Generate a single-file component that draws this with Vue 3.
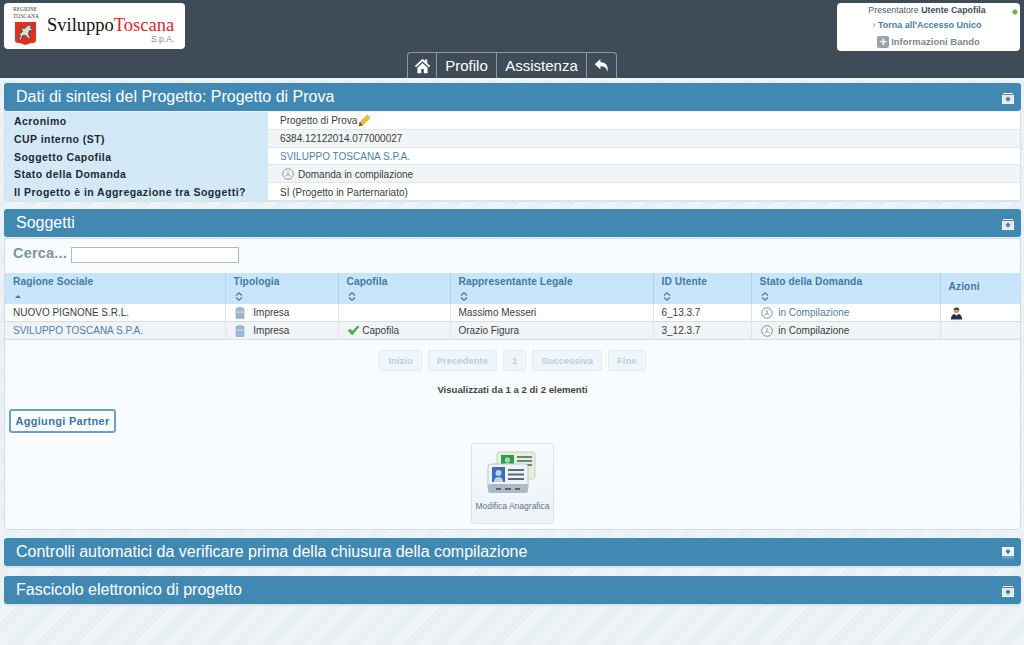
<template>
  <div class="page">
    <!-- testata -->
    <header class="top">
      <div class="top-row">
        <div class="logo-box">
          <div class="regione">
            <span class="regione-txt">REGIONE<br>TOSCANA</span>
            <svg class="shield" viewBox="0 0 24 26">
              <path d="M1 1H23V20Q23 23 18 23L12 25L6 23Q1 23 1 20Z" fill="#e0301e" />
              <path d="M4 15L9 11L7 7L11 8L14 5L19 4L17 7L20 10L16 10L15 14L18 19L15 18L12 15L9 15L7 20L5 19L7 15Z" fill="#dcdcdc" stroke="#4a4a4a" stroke-width=".9" />
            </svg>
          </div>
          <div class="brand">
            <div class="brand-name">Sviluppo<span class="red">Toscana</span></div>
            <div class="spa">S.p.A.</div>
          </div>
        </div>
        <div class="user-box">
          <i class="led"></i>
          <div class="user-line first">Presentatore <b>Utente Capofila</b></div>
          <div class="user-line back">› <b>Torna all'Accesso Unico</b></div>
          <div class="user-line info"><i class="plus">+</i><b>Informazioni Bando</b></div>
        </div>
      </div>
      <nav class="tabs">
        <a class="tab icon">
          <svg viewBox="0 0 20 20" width="17" height="17"><path d="M10 2L1 10.5L2.5 12L10 5L17.5 12L19 10.5L15.5 7.2V3H13V4.8Z M4 12.5L10 7L16 12.5V19H11.5V14H8.500V19H4Z" fill="#fff" /></svg>
        </a>
        <a class="tab">Profilo</a>
        <a class="tab">Assistenza</a>
        <a class="tab icon">
          <svg viewBox="0 0 20 20" width="16" height="17"><path d="M8 2V6C14 6 18 9 17 18C15.500 13 13 11 8 11V15L1 8.500Z" fill="#fff" /></svg>
        </a>
      </nav>
    </header>

    <main class="content">
      <!-- dati di sintesi -->
      <section class="panel first">
        <div class="panel-head">
          <span>Dati di sintesi del Progetto: Progetto di Prova</span>
          <svg class="toggle" viewBox="0 0 12 12"><rect x=".5" y=".5" width="11" height="11" fill="#dbe9f2" stroke="#f4f8fb" /><rect x="0" y="0" width="12" height="3" fill="#5f7f96" /><rect x="1" y="1" width="10" height="1" fill="#eef4f8" /><path d="M6 4.500L8.500 7L6 9.500L3.500 7Z" fill="#55788f" /></svg>
        </div>
        <div class="summary">
          <div v-for="(r, i) in summary" :key="i" class="sum-row" :class="{ odd: i % 2 }">
            <div class="sum-label">{{ r.label }}</div>
            <div class="sum-val" :class="r.cls">
              <svg v-if="r.clock" class="clock big" viewBox="0 0 12 12"><circle cx="6" cy="6" r="5.300" fill="#f4f6f7" stroke="#8b979e" /><path d="M6 3V6.500L3.500 8M6 6.500L8.500 8" fill="none" stroke="#7b8890" stroke-width=".8" /></svg>
              <span>{{ r.value }}</span>
              <svg v-if="r.pencil" class="pencil" viewBox="0 0 14 14"><path d="M1 13L2 9L10 1L13 4L5 12Z" fill="#f2c230" stroke="#b98a1a" stroke-width=".6" /><path d="M1 13L2 9L5 12Z" fill="#54483a" /></svg>
            </div>
          </div>
        </div>
      </section>

      <!-- soggetti -->
      <section class="panel">
        <div class="panel-head">
          <span>Soggetti</span>
          <svg class="toggle" viewBox="0 0 12 12"><rect x=".5" y=".5" width="11" height="11" fill="#dbe9f2" stroke="#f4f8fb" /><rect x="0" y="0" width="12" height="3" fill="#5f7f96" /><rect x="1" y="1" width="10" height="1" fill="#eef4f8" /><path d="M6 4.500L8.500 7L6 9.500L3.500 7Z" fill="#55788f" /></svg>
        </div>
        <div class="box">
          <div class="search">
            <label>Cerca...</label>
            <input type="text">
          </div>
          <table class="grid">
            <colgroup>
              <col v-for="(w, i) in colWidths" :key="i" :style="{ width: w + 'px' }">
            </colgroup>
            <thead>
              <tr>
                <th v-for="c in columns" :key="c.name" :class="{ plain: !c.sort }">
                  <div>{{ c.name }}</div>
                  <svg v-if="c.sort === 'asc'" class="sort" viewBox="0 0 8 9"><path d="M4 3L7 6H1Z" fill="#3d7ba3" /></svg>
                  <svg v-else-if="c.sort" class="sort" viewBox="0 0 8 9"><path d="M1 3.500L4 .8L7 3.500M1 5.500L4 8.200L7 5.500" fill="none" stroke="#3d7ba3" stroke-width="1.200" /></svg>
                </th>
              </tr>
            </thead>
            <tbody>
              <tr v-for="(r, i) in subjects" :key="i" :class="{ odd: i % 2 }">
                <td :class="{ link: r.link }">{{ r.name }}</td>
                <td class="tipo">
                  <svg class="doc" viewBox="0 0 10 12"><path d="M1 1.500H3V.5H7V1.500H9V11.500H1Z" fill="#9db6d6" stroke="#7f97b8" stroke-width=".5" /><path d="M1.500 5H8.500" stroke="#d7e2f0" /></svg>
                  Impresa
                </td>
                <td class="capo">
                  <template v-if="r.capofila">
                    <svg class="check" viewBox="0 0 14 12"><path d="M1 6L3.500 4.500L5.500 7L12 .8L13 2L5.500 11Z" fill="#46b04a" stroke="#2f8a36" stroke-width=".5" /></svg>
                    Capofila
                  </template>
                </td>
                <td>{{ r.legale }}</td>
                <td>{{ r.id }}</td>
                <td class="stato" :class="{ link: r.statoLink }">
                  <svg class="clock" viewBox="0 0 12 12"><circle cx="6" cy="6" r="5.300" fill="#f4f6f7" stroke="#8b979e" /><path d="M6 3V6.500L3.500 8M6 6.500L8.500 8" fill="none" stroke="#7b8890" stroke-width=".8" /></svg>
                  {{ r.stato }}
                </td>
                <td class="azioni">
                  <svg v-if="r.azione" class="person" viewBox="0 0 14 14"><circle cx="7" cy="3.800" r="3" fill="#c99a73" /><path d="M4 3.500Q4 .5 7 .5T10 3.500Q8 2 4 3.500Z" fill="#4a3422" /><path d="M1 13.500Q1 8 5 7.500L7 9.500L9 7.500Q13 8 13 13.500Z" fill="#28323f" /></svg>
                </td>
              </tr>
            </tbody>
          </table>

          <div class="pager">
            <span v-for="p in pages" :key="p" class="page-btn">{{ p }}</span>
          </div>
          <div class="count">Visualizzati da 1 a 2 di 2 elementi</div>

          <button class="add-btn">Aggiungi Partner</button>

          <div class="tile-wrap">
            <div class="tile">
              <svg class="tile-ico" viewBox="0 0 50 44">
                <rect x="10" y="1" width="38" height="27" rx="3" fill="#e4efdc" stroke="#c3d6b8" />
                <rect x="14" y="4" width="13" height="12" fill="#2f9a52" />
                <circle cx="20.500" cy="9" r="2.700" fill="#a5d8a8" />
                <path d="M16 16Q16 12 20.500 12T25 16Z" fill="#a5d8a8" />
                <path d="M30 6H45M30 10H45M30 14H45" stroke="#6f8478" stroke-width="2" />
                <rect x="1" y="13" width="40" height="27" rx="3" fill="#eef3f8" stroke="#b9c6d2" />
                <rect x="1" y="33" width="40" height="9" rx="2" fill="#aeb9c3" />
                <rect x="5" y="16" width="13" height="15" fill="#3d6fb8" />
                <circle cx="11.500" cy="22" r="3" fill="#b9d3ea" />
                <path d="M7 31Q7 26 11.500 26T16 31Z" fill="#b9d3ea" />
                <path d="M21 19H37M21 23.500H37M21 28H37" stroke="#5d6873" stroke-width="2" />
                <path d="M9 38H14M18 38H24M28 38H33" stroke="#59646e" stroke-width="2" />
              </svg>
              <div class="tile-label">Modifica Anagrafica</div>
            </div>
          </div>
        </div>
      </section>

      <section class="panel closed">
        <div class="panel-head">
          <span>Controlli automatici da verificare prima della chiusura della compilazione</span>
          <svg class="toggle" viewBox="0 0 12 12"><rect x=".5" y=".5" width="11" height="11" fill="#eef5f9" stroke="#f4f8fb" /><path d="M6 2L8.500 4.500L6 7L3.500 4.500Z" fill="#55788f" /><rect x="0" y="9" width="12" height="3" fill="#5b9fd0" /></svg>
        </div>
      </section>
      <section class="panel closed">
        <div class="panel-head">
          <span>Fascicolo elettronico di progetto</span>
          <svg class="toggle" viewBox="0 0 12 12"><rect x=".5" y=".5" width="11" height="11" fill="#dbe9f2" stroke="#f4f8fb" /><rect x="0" y="0" width="12" height="3" fill="#5f7f96" /><rect x="1" y="1" width="10" height="1" fill="#eef4f8" /><path d="M6 4.500L8.500 7L6 9.500L3.500 7Z" fill="#55788f" /></svg>
        </div>
      </section>
    </main>
  </div>
</template>

<script setup>
const summary = [
  { label: 'Acronimo', value: 'Progetto di Prova', pencil: true },
  { label: 'CUP interno (ST)', value: '6384.12122014.077000027' },
  { label: 'Soggetto Capofila', value: 'SVILUPPO TOSCANA S.P.A.', cls: 'link' },
  { label: 'Stato della Domanda', value: 'Domanda in compilazione', clock: true, cls: 'indent' },
  { label: 'Il Progetto è in Aggregazione tra Soggetti?', value: 'SÌ (Progetto in Parternariato)' },
]

const colWidths = [220, 113, 112, 203, 98, 189, 80]

const columns = [
  { name: 'Ragione Sociale', sort: 'asc' },
  { name: 'Tipologia', sort: 'both' },
  { name: 'Capofila', sort: 'both' },
  { name: 'Rappresentante Legale', sort: 'both' },
  { name: 'ID Utente', sort: 'both' },
  { name: 'Stato della Domanda', sort: 'both' },
  { name: 'Azioni' },
]

const subjects = [
  { name: 'NUOVO PIGNONE S.R.L.', legale: 'Massimo Messeri', id: '6_13.3.7', stato: 'in Compilazione', statoLink: true, azione: true },
  { name: 'SVILUPPO TOSCANA S.P.A.', link: true, capofila: true, legale: 'Orazio Figura', id: '3_12.3.7', stato: 'in Compilazione' },
]

const pages = ['Inizio', 'Precedente', '1', 'Successiva', 'Fine']
</script>

<style>
body { margin: 0; }
</style>

<style scoped>
.page { width: 1024px; height: 645px; overflow: hidden; font-family: "Liberation Sans", Arial, sans-serif; font-size: 10px; color: #333; background: repeating-linear-gradient(135deg, #e9f0f4 0 10px, #edf3f6 10px 20px); }
.top { height: 75px; padding-top: 3px; background: #3f4c57; border-top: 1px solid #9aa3aa; border-bottom: 2px solid #f2f6f8; margin-top: -1px; }
.top-row { display: flex; justify-content: space-between; align-items: flex-start; padding: 0 4px; height: 49px; }
.logo-box { width: 181px; height: 46px; background: #fff; border-radius: 4px; display: flex; box-sizing: border-box; padding: 3px 0 0 9px; }
.regione { width: 28px; }
.regione-txt { display: block; font-family: "Liberation Serif", serif; font-size: 5.500px; line-height: 7px; color: #444; white-space: nowrap; }
.shield { display: block; width: 23px; height: 25px; margin: 1px 0 0 1px; }
.brand { margin-left: 6px; padding-top: 9px; }
.brand-name { font-family: "Liberation Serif", serif; font-size: 18.500px; line-height: 20px; color: #111; }
.red { color: #d8282c; }
.spa { font-size: 8.500px; color: #888; text-align: right; line-height: 9px; }
.user-box { width: 183px; height: 48px; background: #fff; border-radius: 4px; text-align: center; position: relative; color: #4a5b68; box-sizing: border-box; }
.user-line { font-size: 8.800px; line-height: 16px; height: 16px; padding-right: 3px; }
.user-line.first { line-height: 14px; height: 14px; }
.user-line b { color: #3f4e5c; }
.back, .back b { color: #4e7e9e; }
.user-line.back { font-size: 9px; }
.info { font-size: 9.500px; display: flex; justify-content: center; align-items: center; height: 17px; padding-right: 0; }
.info b { color: #7d8790; }
.plus { width: 12px; height: 12px; background: #9ca3a8; color: #fff; border-radius: 2px; font-style: normal; font-weight: bold; font-size: 12px; line-height: 12px; margin-right: 2px; }
.led { position: absolute; top: 6px; right: 2px; width: 4px; height: 4px; border-radius: 50%; background: #6aa84f; border: 1px solid #b6d9a7; }
.tabs { display: flex; justify-content: center; height: 26px; }
.tab { box-sizing: border-box; height: 26px; border: 1px solid #8c989f; border-bottom: none; border-left: none; color: #fff; font-size: 15px; display: flex; align-items: center; justify-content: center; }
.tab:nth-child(2) { width: 60px; }
.tab:nth-child(3) { width: 90px; }
.tab:first-child { border-left: 1px solid #8c989f; border-top-left-radius: 4px; }
.tab:last-child { border-top-right-radius: 4px; }
.tab.icon { width: 30px; }
.content { padding: 3px 3px 0 4px; }
.panel { margin-bottom: 8px; }
.panel.first { margin-bottom: 7px; }
.panel.closed { margin-bottom: 8px; border-bottom: 2px solid #d8e4ec; border-radius: 0 0 4px 4px; }
.panel-head { height: 28px; background: #4189b3; border-radius: 3px; color: #fff; font-size: 16px; display: flex; align-items: center; justify-content: space-between; padding: 0 7px 0 12px; }
.toggle { width: 12px; height: 12px; margin-top: 2px; }
.summary { margin-top: 1px; background: #fff; border: 1px solid #d5e0e7; border-top: none; border-radius: 0 0 3px 3px; }
.sum-row { display: flex; height: 17.800px; align-items: stretch; }
.sum-label { width: 263px; background: #d4e9f7; box-sizing: border-box; font-weight: bold; font-size: 10.500px; letter-spacing: .45px; line-height: 19px; padding-left: 9px; color: #1e2a33; white-space: nowrap; }
.sum-val { flex: 1; display: flex; align-items: center; padding: 1px 0 0 12px; box-sizing: border-box; border-bottom: 1px solid #dde6ea; color: #3c3c3c; background: #fff; font-size: 10px; }
.sum-row.odd .sum-val { background: #f1f5f7; }
.sum-val.link { color: #4f7fa5; }
.sum-val.indent { padding-left: 14px; }
.clock { width: 12px; height: 12px; margin: 0 3px 0 1px; vertical-align: -3px; }
.clock.big { margin: 0 4px 0 0; }
.pencil { width: 13px; height: 13px; margin-left: 1px; }
.box { margin-top: 1px; height: 292px; background: #f9fcfe; border: 1px solid #d0dde6; border-radius: 0 0 3px 3px; box-sizing: border-box; }
.search { display: flex; align-items: center; height: 34px; padding: 0 0 5px 8px; box-sizing: border-box; }
.search label { font-size: 14.500px; font-weight: bold; color: #7c95a5; margin-right: 4px; letter-spacing: .2px; }
.search input { width: 168px; height: 16px; box-sizing: border-box; border: 1px solid #b5b5b5; background: #fff; padding: 0; margin: 4px 0 0 0; }
.grid { width: 1015px; border-collapse: collapse; table-layout: fixed; }
.grid th { background: #c9e5fb; height: 31px; padding: 3px 8px 0; box-sizing: border-box; text-align: left; vertical-align: top; font-size: 10.200px; font-weight: bold; color: #3e7ba5; border-right: 1px solid #b9d2e2; letter-spacing: .1px; }
.grid th:last-child { border-right: none; }
.grid th.plain { vertical-align: middle; padding: 0 8px 2px; }
.grid th div { line-height: 12px; }
.sort { display: block; width: 8px; height: 9px; margin: 4px 0 0 1px; }
.grid td { height: 18px; padding: 0 8px; box-sizing: border-box; font-size: 10px; color: #3c3c3c; border-right: 1px solid #dde6ea; border-bottom: 1px solid #d5dfe5; background: #fff; white-space: nowrap; overflow: hidden; }
.grid td:last-child { border-right: none; }
.grid tr.odd td { background: #f0f4f7; }
.grid td.link { color: #4f7fa5; }
.tipo .doc { width: 10px; height: 12px; margin: 0 6px 0 1px; vertical-align: -3px; }
.check { width: 13px; height: 11px; vertical-align: -2px; }
.person { width: 13px; height: 13px; margin: 2px 0 0 1px; display: block; }
.pager { display: flex; justify-content: center; gap: 6px; margin-top: 10px; }
.page-btn { height: 21px; line-height: 19px; padding: 0 8px; background: #eff6fb; border: 1px solid #e2edf4; border-radius: 2px; box-sizing: border-box; color: #b9cfdd; font-weight: bold; font-size: 9.500px; }
.count { text-align: center; font-size: 9.600px; font-weight: bold; color: #454545; line-height: 12px; margin-top: 13px; }
.add-btn { display: block; margin: 13px 0 0 4px; width: 107px; height: 24px; padding: 0; background: #fdfeff; border: 2px solid #6ba1cd; border-radius: 3px; box-sizing: border-box; font-family: inherit; font-size: 11px; font-weight: bold; color: #3a76a6; letter-spacing: .3px; }
.tile-wrap { display: flex; justify-content: center; margin-top: 10px; }
.tile { width: 83px; height: 81px; background: linear-gradient(180deg, #f8fbfd, #ebf2f8); border: 1px solid #d9e4ec; border-radius: 3px; box-sizing: border-box; text-align: center; padding-top: 7px; }
.tile-ico { display: block; width: 50px; height: 44px; margin-left: 15px; }
.tile-label { font-size: 8.500px; color: #5f7485; margin-top: 6px; white-space: nowrap; }
</style>
